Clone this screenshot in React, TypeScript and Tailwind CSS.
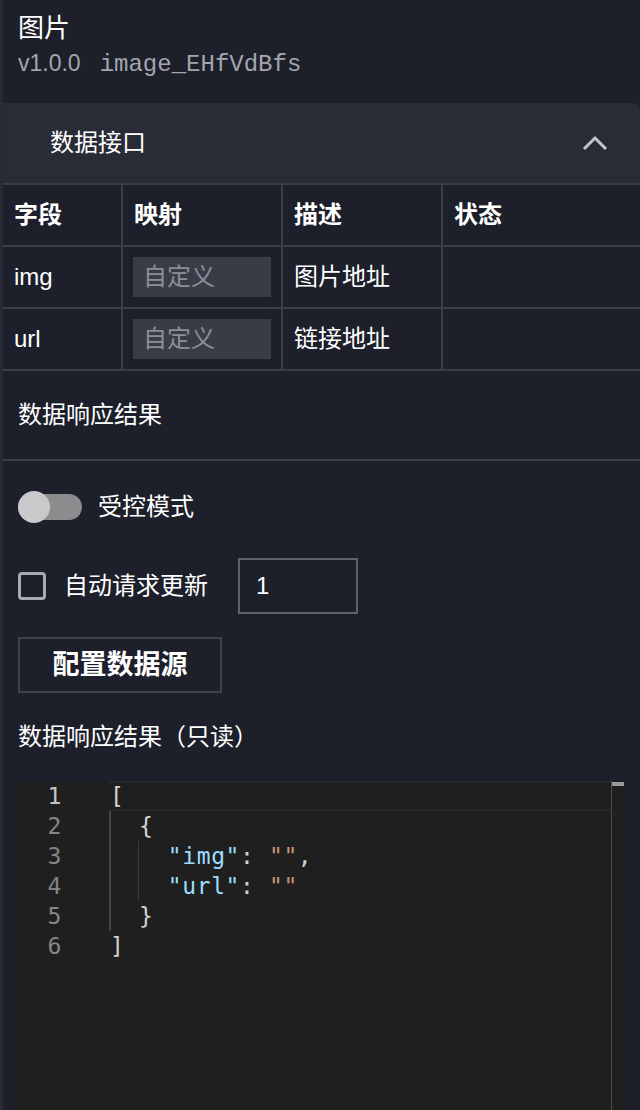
import React from "react";

const cjk = { fontFamily: '"Liberation Sans", "Noto Sans CJK SC", sans-serif' };
const mono = { fontFamily: '"DejaVu Sans Mono", monospace' };

const rows = [
  { field: "img", desc: "图片地址" },
  { field: "url", desc: "链接地址" },
];

const code: React.ReactNode[] = [
  <span className="text-[#d4d4d4]">[</span>,
  <span className="text-[#d4d4d4]">{"  {"}</span>,
  <>
    <span>{"    "}</span>
    <span className="text-[#9cdcfe]">"img"</span>
    <span className="text-[#d4d4d4]">: </span>
    <span className="text-[#ce9178]">""</span>
    <span className="text-[#d4d4d4]">,</span>
  </>,
  <>
    <span>{"    "}</span>
    <span className="text-[#9cdcfe]">"url"</span>
    <span className="text-[#d4d4d4]">: </span>
    <span className="text-[#ce9178]">""</span>
  </>,
  <span className="text-[#d4d4d4]">{"  }"}</span>,
  <span className="text-[#d4d4d4]">]</span>,
];

export default function App() {
  return (
    <div className="w-[640px] h-[1110px] overflow-hidden bg-[#1d1f2a] border-l-[3px] border-[#282a36] text-white" style={cjk}>
      <div className="px-[15px] pt-[12px] h-[103px]">
        <div className="text-[26px] leading-[32px]">图片</div>
        <div className="flex items-baseline gap-[19px] text-[#a3a6ae] mt-[4px] leading-[30px]">
          <span className="text-[23px]">v1.0.0</span>
          <span className="text-[24px]" style={{ fontFamily: '"Liberation Mono", monospace' }}>image_EHfVdBfs</span>
        </div>
      </div>

      <div className="bg-[#292c37] rounded-tr-[8px] h-[80px] flex items-center justify-between pl-[47px] pr-[32px]">
        <span className="text-[24px] leading-[30px]">数据接口</span>
        <svg width="26" height="16" viewBox="0 0 26 16" fill="none" stroke="#c4c6cc" strokeWidth="3">
          <path d="M2 14 L13 3 L24 14" />
        </svg>
      </div>

      <div className="grid grid-cols-[120px_160px_160px_1fr] border-t-2 border-[#3a3d48] text-[24px] leading-[30px]">
        {["字段", "映射", "描述", "状态"].map((h, i) => (
          <div key={h} className={`h-[62px] flex items-center px-[11px] font-bold border-b-2 border-[#3a3d48] ${i < 3 ? "border-r-2" : ""}`}>
            {h}
          </div>
        ))}
        {rows.map((r) => (
          <React.Fragment key={r.field}>
            <div className="h-[62px] flex items-center px-[11px] border-b-2 border-r-2 border-[#3a3d48]">{r.field}</div>
            <div className="h-[62px] flex items-center px-[10px] border-b-2 border-r-2 border-[#3a3d48]">
              <div className="w-[138px] h-[40px] bg-[#393c47] flex items-center px-[10px] text-[#8b8e97]">自定义</div>
            </div>
            <div className="h-[62px] flex items-center px-[11px] border-b-2 border-r-2 border-[#3a3d48]">{r.desc}</div>
            <div className="h-[62px] border-b-2 border-[#3a3d48]" />
          </React.Fragment>
        ))}
      </div>

      <div className="h-[90px] flex items-center px-[15px] text-[24px] leading-[30px] border-b-2 border-[#3a3d48]">数据响应结果</div>

      <div className="px-[15px] pt-[31px] text-[24px] leading-[30px]">
        <div className="flex items-center gap-[16px]">
          <div className="w-[64px] h-[26px] rounded-full bg-[#8c8c8f] relative">
            <div className="absolute left-0 top-[-3px] w-[32px] h-[32px] rounded-full bg-[#c9c9cb]" />
          </div>
          <span>受控模式</span>
        </div>

        <div className="flex items-center mt-[36px]">
          <div className="w-[28px] h-[28px] rounded-[4px] border-[3px] border-[#a9abb1]" />
          <span className="ml-[18px]">自动请求更新</span>
          <div className="ml-[30px] w-[120px] h-[56px] border-2 border-[#5e616b] flex items-center px-[16px]">1</div>
        </div>

        <button className="mt-[23px] w-[204px] h-[56px] border-2 border-[#3f424c] text-[27px] font-bold flex items-center justify-center">配置数据源</button>

        <div className="mt-[29px]">数据响应结果（只读）</div>
      </div>

      <div className="mt-[29px] ml-[13px] w-[608px] h-[340px] bg-[#1f1f1f] relative text-[23px] leading-[30px] tracking-[0.6px]" style={mono}>
        <div className="absolute left-[92px] right-[12px] top-0 h-[30px] border-y-2 border-[#282828]" />
        <div className="absolute left-[93px] top-[30px] h-[120px] w-[2px] bg-[#444]" />
        <div className="absolute left-[122px] top-[60px] h-[60px] w-[1px] bg-[#3a3a3a]" />
        <div className="absolute right-[12px] top-0 bottom-0 w-[1px] bg-[#4a4a4a]" />
        <div className="absolute right-[0px] top-[1px] w-[12px] h-[4px] bg-[#9a9a9a]" />
        <div className="flex">
          <div className="w-[46px] text-right text-[#858585]">
            {code.map((_, i) => (
              <div key={i} className={i === 0 ? "text-[#c6c6c6]" : ""}>{i + 1}</div>
            ))}
          </div>
          <div className="ml-[48px] whitespace-pre">
            {code.map((c, i) => (
              <div key={i}>{c}</div>
            ))}
          </div>
        </div>
      </div>
    </div>
  );
}
